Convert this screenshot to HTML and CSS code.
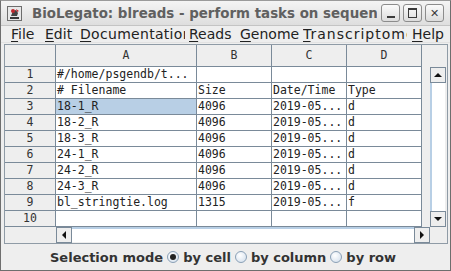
FILE: index.html
```html
<!DOCTYPE html>
<html>
  <head>
    <title>BioLegato: blreads</title>
    <link rel="stylesheet" href="styles.css">
  </head>
  <body>
    <div class="window">
      <div class="titlebar">
        <div class="appicon">
          <svg width="15" height="15" viewBox="0 0 15 15">
            <rect x="0.5" y="0.5" width="14" height="14" fill="#e8e8e8" stroke="#6d6d6d"/>
            <path d="M3 11 L12 11 L12 13 L3 13 Z" fill="#3a3a3a"/>
            <path d="M4 10 L6 5 L9 4 L11 7 L10 10 Z" fill="#444"/>
            <circle cx="6" cy="5" r="2" fill="#c0282d"/>
            <path d="M9 3 L12 5 L10 6 Z" fill="#c0282d"/>
          </svg>
        </div>
        <div class="title">BioLegato: blreads - perform tasks on sequence data</div>
        <div class="wbuttons">
          <div class="wbtn"><span class="ico-min"></span></div>
          <div class="wbtn"><span class="ico-max"></span></div>
          <div class="wbtn"><span class="ico-close">&#x2715;</span></div>
        </div>
      </div>

      <div class="menubar">
        <div class="menu m-file"><u>F</u>ile</div>
        <div class="menu m-edit"><u>E</u>dit</div>
        <div class="menu m-doc"><u>D</u>ocumentation</div>
        <div class="menu m-reads"><u>R</u>eads</div>
        <div class="menu m-genome"><u>G</u>enome</div>
        <div class="menu m-trans"><u>T</u>ranscriptome</div>
        <div class="menu m-help"><u>H</u>elp</div>
      </div>

      <div class="sheet">
        <div class="corner"></div>
        <div class="colhead">A</div>
        <div class="colhead">B</div>
        <div class="colhead">C</div>
        <div class="colhead">D</div>
        <div class="head-filler"></div>
        <div class="body-filler"></div>
        <div class="vscroll-col">
          <div class="sb-btn up"><span class="tri-up"></span></div>
          <div class="vtrack"></div>
          <div class="sb-btn down"><span class="tri-down"></span></div>
        </div>

        <div class="rowhead">1</div>
        <div class="cell">#/home/psgendb/t...</div>
        <div class="cell"></div>
        <div class="cell"></div>
        <div class="cell"></div>

        <div class="rowhead">2</div>
        <div class="cell"># Filename</div>
        <div class="cell">Size</div>
        <div class="cell">Date/Time</div>
        <div class="cell">Type</div>

        <div class="rowhead">3</div>
        <div class="cell selected">18-1_R</div>
        <div class="cell">4096</div>
        <div class="cell">2019-05...</div>
        <div class="cell">d</div>

        <div class="rowhead">4</div>
        <div class="cell">18-2_R</div>
        <div class="cell">4096</div>
        <div class="cell">2019-05...</div>
        <div class="cell">d</div>

        <div class="rowhead">5</div>
        <div class="cell">18-3_R</div>
        <div class="cell">4096</div>
        <div class="cell">2019-05...</div>
        <div class="cell">d</div>

        <div class="rowhead">6</div>
        <div class="cell">24-1_R</div>
        <div class="cell">4096</div>
        <div class="cell">2019-05...</div>
        <div class="cell">d</div>

        <div class="rowhead">7</div>
        <div class="cell">24-2_R</div>
        <div class="cell">4096</div>
        <div class="cell">2019-05...</div>
        <div class="cell">d</div>

        <div class="rowhead">8</div>
        <div class="cell">24-3_R</div>
        <div class="cell">4096</div>
        <div class="cell">2019-05...</div>
        <div class="cell">d</div>

        <div class="rowhead">9</div>
        <div class="cell">bl_stringtie.log</div>
        <div class="cell">1315</div>
        <div class="cell">2019-05...</div>
        <div class="cell">f</div>

        <div class="rowhead">10</div>
        <div class="cell"></div>
        <div class="cell"></div>
        <div class="cell"></div>
        <div class="cell"></div>

        <div class="hcorner-left"></div>
        <div class="hscroll">
          <div class="sb-btn left"><span class="tri-left"></span></div>
          <div class="htrack"></div>
          <div class="sb-btn right"><span class="tri-right"></span></div>
        </div>
      </div>

      <div class="modebar">
        <span class="label">Selection mode</span>
        <label class="radio"><span class="dot on"></span>by cell</label>
        <label class="radio"><span class="dot"></span>by column</label>
        <label class="radio"><span class="dot"></span>by row</label>
      </div>
    </div>
  </body>
</html>
```

FILE: styles.css
```css
html, body {
  margin: 0;
  padding: 0;
  background: #eeeeee;
}

.window {
  width: 451px;
  height: 271px;
  box-sizing: border-box;
  border: 1px solid #6e6e6e;
  border-top-color: #9a9a9a;
  background: #eeeeee;
  font-family: "DejaVu Sans", sans-serif;
  overflow: hidden;
  display: flex;
  flex-direction: column;
}

/* title bar */

.titlebar {
  height: 24px;
  flex: none;
  display: flex;
  align-items: center;
  background: linear-gradient(#f4f4f4, #dedede);
  border-bottom: 1px solid #c4c4c4;
}

.appicon {
  width: 15px;
  height: 15px;
  margin: 0 10px 0 6px;
  flex: none;
}

.title {
  width: 345px;
  flex: none;
  overflow: hidden;
  white-space: nowrap;
  font-weight: bold;
  font-size: 13.4px;
  color: #606060;
}

.wbuttons {
  display: flex;
  gap: 3px;
  margin-left: 4px;
}

.wbtn {
  width: 19px;
  height: 18px;
  box-sizing: border-box;
  border: 1px solid #8c8c8c;
  border-radius: 3px;
  background: linear-gradient(#fbfbfb, #dcdcdc);
  display: flex;
  align-items: center;
  justify-content: center;
  color: #3a3a3a;
}

.ico-min {
  width: 8px;
  height: 2px;
  background: #3a3a3a;
  margin-top: 7px;
}

.ico-max {
  width: 7px;
  height: 7px;
  border: 1px solid #3a3a3a;
  border-top-width: 2px;
}

.ico-close {
  font-size: 11px;
  font-weight: bold;
  line-height: 1;
}

/* menu bar */

.menubar {
  height: 16px;
  flex: none;
  display: flex;
  align-items: center;
  padding-left: 10px;
  font-size: 14px;
  color: #222222;
  border-bottom: 1px solid #e2e2e2;
}

.menu {
  white-space: nowrap;
  overflow: hidden;
  flex: none;
  line-height: 16px;
}

.menu u {
  text-decoration-thickness: 1px;
  text-underline-offset: 2px;
}

.m-file { width: 34px; }
.m-edit { width: 35px; }
.m-doc { width: 105px; margin-right: 4px; letter-spacing: 0.3px; }
.m-reads { width: 51px; }
.m-genome { width: 63px; }
.m-trans { width: 104px; margin-right: 5px; letter-spacing: 1px; }
.m-help { width: 40px; }

/* spreadsheet */

.sheet {
  margin: 1px 2px 0 3px;
  height: 200px;
  box-sizing: border-box;
  border: 1px solid #8f9ba6;
  flex: none;
  display: grid;
  grid-template-columns: 51px 141px 75px 75px 75px 8px 16px;
  grid-template-rows: 22px repeat(10, 16px) 16px;
  font-family: "DejaVu Sans Mono", monospace;
  font-size: 11.5px;
  color: #222222;
  background: #eeeeee;
}

.corner,
.rowhead,
.colhead,
.cell {
  box-sizing: border-box;
  border-right: 1px solid #7a8a99;
  border-bottom: 1px solid #7a8a99;
  white-space: nowrap;
  overflow: hidden;
}

.corner,
.colhead,
.rowhead {
  background: #eeeeee;
  text-align: center;
  color: #333333;
}

.colhead {
  line-height: 21px;
}

.rowhead {
  grid-column: 1;
  line-height: 15px;
}

.cell {
  background: #ffffff;
  padding-left: 1px;
  line-height: 15px;
}

.cell.selected {
  background: #b8cfe5;
}

.head-filler {
  grid-column: 6 / span 2;
  grid-row: 1;
  background: #eeeeee;
}

.body-filler {
  grid-column: 6;
  grid-row: 2 / span 10;
  background: #eeeeee;
}

.vscroll-col {
  grid-column: 7;
  grid-row: 2 / span 10;
  display: flex;
  flex-direction: column;
  background: #eeeeee;
}

.vtrack {
  flex: 1;
  background: #ffffff;
  border-left: 2px solid #b8cfe5;
  border-right: 1px solid #eeeeee;
}

.sb-btn {
  flex: none;
  box-sizing: border-box;
  background: #eeeeee;
  border: 1px solid #7a8a99;
  display: flex;
  align-items: center;
  justify-content: center;
}

.sb-btn.up,
.sb-btn.down {
  height: 16px;
}

.sb-btn.left,
.sb-btn.right {
  width: 16px;
}

.tri-up {
  border-left: 4px solid transparent;
  border-right: 4px solid transparent;
  border-bottom: 4px solid #111111;
}

.tri-down {
  border-left: 4px solid transparent;
  border-right: 4px solid transparent;
  border-top: 4px solid #111111;
}

.tri-left {
  border-top: 4px solid transparent;
  border-bottom: 4px solid transparent;
  border-right: 4px solid #111111;
}

.tri-right {
  border-top: 4px solid transparent;
  border-bottom: 4px solid transparent;
  border-left: 4px solid #111111;
}

.hcorner-left {
  grid-column: 1;
  grid-row: 12;
  background: #eeeeee;
}

.hscroll {
  grid-column: 2 / span 5;
  grid-row: 12;
  display: flex;
}

.htrack {
  flex: 1;
  background: #ffffff;
  border-top: 2px solid #b8cfe5;
  border-bottom: 1px solid #eeeeee;
}

/* selection mode */

.modebar {
  flex: 1;
  display: flex;
  align-items: center;
  padding-left: 49px;
  font-size: 13px;
  font-weight: bold;
  color: #333333;
}

.label {
  margin-right: 4px;
}

.radio {
  display: flex;
  align-items: center;
  margin-right: 4px;
}

.dot {
  width: 12px;
  height: 12px;
  box-sizing: border-box;
  border-radius: 50%;
  border: 1px solid #8aa0b6;
  background: radial-gradient(circle at 40% 35%, #ffffff, #cfdceb);
  margin-right: 4px;
  position: relative;
}

.dot.on::after {
  content: "";
  position: absolute;
  left: 2px;
  top: 2px;
  width: 6px;
  height: 6px;
  border-radius: 50%;
  background: #222222;
}
```
